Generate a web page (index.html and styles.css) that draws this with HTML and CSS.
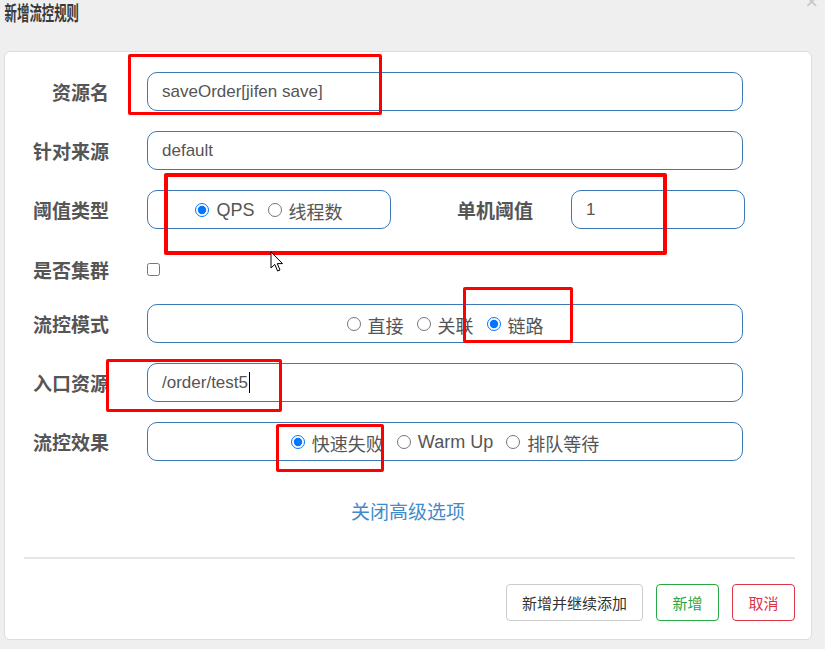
FILE: index.html
```html
<!DOCTYPE html>
<html lang="zh-CN">
<head>
<meta charset="utf-8">
<title>新增流控规则</title>
<link rel="stylesheet" href="styles.css">
</head>
<body>
<div class="modal">
  <div class="modal-header">
    <h4 class="modal-title">新增流控规则</h4>
    <span class="close">×</span>
  </div>
  <div class="card">
    <div class="row">
      <label class="label">资源名</label>
      <div class="input">saveOrder[jifen save]</div>
    </div>
    <div class="row">
      <label class="label">针对来源</label>
      <div class="input">default</div>
    </div>
    <div class="row">
      <label class="label">阈值类型</label>
      <div class="input radios narrow">
        <label class="opt"><input type="radio" name="grade" checked>QPS</label>
        <label class="opt"><input type="radio" name="grade">线程数</label>
      </div>
      <label class="label label2">单机阈值</label>
      <div class="input small">1</div>
    </div>
    <div class="row row-check">
      <label class="label">是否集群</label>
      <input type="checkbox" class="check">
    </div>
    <div class="row">
      <label class="label">流控模式</label>
      <div class="input radios">
        <label class="opt"><input type="radio" name="mode">直接</label>
        <label class="opt"><input type="radio" name="mode">关联</label>
        <label class="opt"><input type="radio" name="mode" checked>链路</label>
      </div>
    </div>
    <div class="row">
      <label class="label">入口资源</label>
      <div class="input">/order/test5<span class="caret"></span></div>
    </div>
    <div class="row last">
      <label class="label">流控效果</label>
      <div class="input radios">
        <label class="opt"><input type="radio" name="effect" checked>快速失败</label>
        <label class="opt"><input type="radio" name="effect">Warm Up</label>
        <label class="opt"><input type="radio" name="effect">排队等待</label>
      </div>
    </div>
    <div class="advanced"><a class="link">关闭高级选项</a></div>
    <div class="divider"></div>
    <div class="footer">
      <button class="btn btn-default">新增并继续添加</button>
      <button class="btn btn-success">新增</button>
      <button class="btn btn-danger">取消</button>
    </div>
  </div>
</div>

<div class="mark m1"></div>
<div class="mark m2"></div>
<div class="mark m3"></div>
<div class="mark m4"></div>
<div class="mark m5"></div>

<svg class="pointer" width="14" height="22" viewBox="0 0 14 22">
  <path d="M1 1 L1 17 L4.8 13.4 L7.6 20 L10 19 L7.3 12.6 L12.5 12.6 Z" fill="#fff" stroke="#000" stroke-width="1" stroke-linejoin="miter"/>
</svg>
</body>
</html>
```

FILE: styles.css
```css
html, body {
  margin: 0;
  padding: 0;
}
body {
  width: 825px;
  height: 649px;
  overflow: hidden;
  background: #efefef;
  font-family: "Liberation Sans", "Noto Sans CJK SC", sans-serif;
  color: #555;
  position: relative;
}
.modal {
  padding: 0 13px 0 4px;
}
.modal-header {
  height: 51px;
  position: relative;
}
.modal-title {
  margin: 0;
  padding: 0 0 0 1px;
  font-size: 20px;
  line-height: 25px;
  font-weight: bold;
  color: #3a3a3a;
  font-family: "Noto Sans CJK SC", sans-serif;
  transform: scaleX(0.62);
  transform-origin: left center;
  white-space: nowrap;
}
.close {
  position: absolute;
  right: -6px;
  top: -9px;
  font-size: 22px;
  line-height: 22px;
  color: #c8c8c8;
}
.card {
  background: #fff;
  border: 1px solid #dcdcdc;
  border-radius: 6px;
  padding: 20px 0 19px 0;
  box-sizing: border-box;
  height: 589px;
}
.row {
  display: flex;
  align-items: center;
  height: 39px;
  margin-bottom: 20px;
}
.row.last {
  margin-bottom: 0;
}
.row-check {
  height: 35px;
  padding-top: 5px;
  box-sizing: border-box;
}
.label {
  width: 104px;
  margin-right: 38px;
  text-align: right;
  font-weight: bold;
  font-size: 19px;
  color: #555;
  font-family: "Noto Sans CJK SC", sans-serif;
  flex: none;
  white-space: nowrap;
}
.label2 {
  width: 142px;
}
.input {
  width: 596px;
  height: 39px;
  box-sizing: border-box;
  border: 1px solid #3a78b8;
  border-radius: 10px;
  padding: 0 14px;
  display: flex;
  align-items: center;
  font-size: 17px;
  color: #555;
  flex: none;
  white-space: nowrap;
}
.input.narrow {
  width: 244px;
}
.input.small {
  width: 174px;
}
.radios {
  justify-content: center;
  gap: 13px;
  padding-top: 2px;
}
.opt {
  display: inline-flex;
  align-items: center;
  font-size: 18px;
  color: #555;
}
.opt input {
  width: 14px;
  height: 14px;
  margin: 0 7px 2px 0;
}
.check {
  width: 13px;
  height: 13px;
  margin: 0;
}
.caret {
  display: inline-block;
  width: 1px;
  height: 21px;
  background: #000;
  margin-left: 1px;
}
.advanced {
  margin-top: 38px;
  text-align: center;
  height: 24px;
  line-height: 24px;
}
.link {
  font-size: 19px;
  color: #428bca;
  font-family: "Noto Sans CJK SC", sans-serif;
}
.divider {
  margin: 34px 16px 0 19px;
  height: 2px;
  background: #e5e5e5;
}
.footer {
  margin-top: 25px;
  padding-right: 16px;
  display: flex;
  justify-content: flex-end;
  gap: 13px;
}
.btn {
  height: 37px;
  box-sizing: border-box;
  background: #fff;
  border: 1px solid #ccc;
  border-radius: 4px;
  font-family: "Noto Sans CJK SC", sans-serif;
  font-size: 15px;
  padding: 0 14px;
  color: #333;
}
.btn-success {
  border-color: #28a745;
  color: #28a745;
  width: 63px;
  padding: 0;
}
.btn-danger {
  border-color: #dc3545;
  color: #dc3545;
  width: 63px;
  padding: 0;
}
.btn-default {
  width: 137px;
  padding: 0;
}
.mark {
  position: absolute;
  border: 3px solid #ff0000;
  border-radius: 2px;
  box-sizing: border-box;
}
.m1 { left: 128px; top: 54px; width: 254px; height: 61px; }
.m2 { left: 164px; top: 173px; width: 503px; height: 82px; border-width: 4px; }
.m3 { left: 463px; top: 287px; width: 110px; height: 56px; }
.m4 { left: 106px; top: 359px; width: 176px; height: 53px; }
.m5 { left: 276px; top: 424px; width: 108px; height: 48px; }
.pointer {
  position: absolute;
  left: 270px;
  top: 251px;
}
```
